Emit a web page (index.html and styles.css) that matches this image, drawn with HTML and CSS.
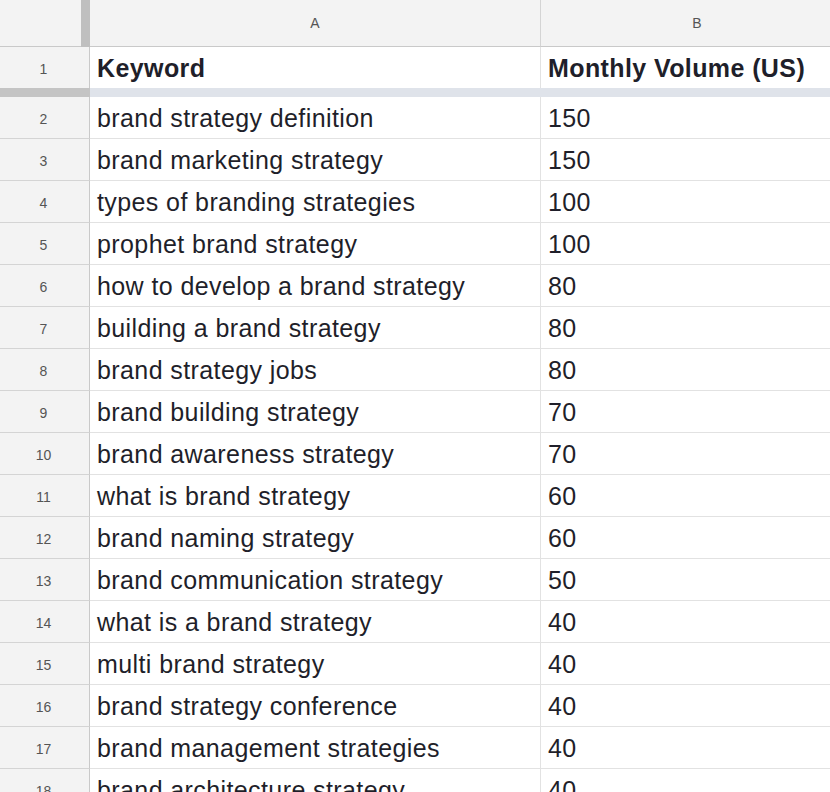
FILE: index.html
```html
<!DOCTYPE html>
<html>
<head>
<meta charset="utf-8">
<link rel="stylesheet" href="styles.css">
</head>
<body>
<div class="sheet">
  <div class="row colhead">
    <div class="corner"></div>
    <div class="vbar"></div>
    <div class="ch a">A</div>
    <div class="ch b">B</div>
  </div>
  <div class="row r1">
    <div class="rh">1</div>
    <div class="cell a bold">Keyword</div>
    <div class="cell b bold">Monthly Volume (US)</div>
  </div>
  <div class="freeze"><div class="fz-rh"></div><div class="fz-cells"></div></div>
  <div class="row"><div class="rh">2</div><div class="cell a">brand strategy definition</div><div class="cell b">150</div></div>
  <div class="row"><div class="rh">3</div><div class="cell a">brand marketing strategy</div><div class="cell b">150</div></div>
  <div class="row"><div class="rh">4</div><div class="cell a">types of branding strategies</div><div class="cell b">100</div></div>
  <div class="row"><div class="rh">5</div><div class="cell a">prophet brand strategy</div><div class="cell b">100</div></div>
  <div class="row"><div class="rh">6</div><div class="cell a">how to develop a brand strategy</div><div class="cell b">80</div></div>
  <div class="row"><div class="rh">7</div><div class="cell a">building a brand strategy</div><div class="cell b">80</div></div>
  <div class="row"><div class="rh">8</div><div class="cell a">brand strategy jobs</div><div class="cell b">80</div></div>
  <div class="row"><div class="rh">9</div><div class="cell a">brand building strategy</div><div class="cell b">70</div></div>
  <div class="row"><div class="rh">10</div><div class="cell a">brand awareness strategy</div><div class="cell b">70</div></div>
  <div class="row"><div class="rh">11</div><div class="cell a">what is brand strategy</div><div class="cell b">60</div></div>
  <div class="row"><div class="rh">12</div><div class="cell a">brand naming strategy</div><div class="cell b">60</div></div>
  <div class="row"><div class="rh">13</div><div class="cell a">brand communication strategy</div><div class="cell b">50</div></div>
  <div class="row"><div class="rh">14</div><div class="cell a">what is a brand strategy</div><div class="cell b">40</div></div>
  <div class="row"><div class="rh">15</div><div class="cell a">multi brand strategy</div><div class="cell b">40</div></div>
  <div class="row"><div class="rh">16</div><div class="cell a">brand strategy conference</div><div class="cell b">40</div></div>
  <div class="row"><div class="rh">17</div><div class="cell a">brand management strategies</div><div class="cell b">40</div></div>
  <div class="row"><div class="rh">18</div><div class="cell a">brand architecture strategy</div><div class="cell b">40</div></div>
</div>
</body>
</html>
```

FILE: styles.css
```css
html, body {
  margin: 0;
  padding: 0;
  background: #ffffff;
  overflow: hidden;
}
.sheet {
  width: 880px;
  font-family: "Liberation Sans", Arial, sans-serif;
  color: #1f1f2a;
}
.row {
  display: flex;
  height: 42px;
}
.colhead {
  height: 47px;
  background: #f3f3f3;
}
.corner {
  width: 81px;
  height: 46px;
  border-bottom: 1px solid #c9c9c9;
  background: #f3f3f3;
}
.vbar {
  width: 9px;
  height: 47px;
  background: #bfbfbf;
}
.ch {
  height: 46px;
  border-bottom: 1px solid #c9c9c9;
  border-right: 1px solid #d4d4d4;
  display: flex;
  align-items: center;
  justify-content: center;
  font-size: 14px;
  color: #555555;
  box-sizing: content-box;
}
.a { width: 450px; }
.b { width: 312px; }
.rh {
  width: 89px;
  flex: none;
  background: #f3f3f3;
  border-right: 1px solid #c9c9c9;
  border-bottom: 1px solid #d4d4d4;
  box-sizing: border-box;
  display: flex;
  align-items: center;
  justify-content: center;
  font-size: 14px;
  color: #555555;
  padding-right: 2px;
  padding-top: 2px;
}
.row .rh { width: 90px; }
.cell {
  flex: none;
  border-right: 1px solid #e2e2e2;
  border-bottom: 1px solid #e2e2e2;
  display: flex;
  align-items: center;
  padding-left: 7px;
  padding-top: 2px;
  font-size: 25px;
  letter-spacing: 0.4px;
  box-sizing: border-box;
  white-space: nowrap;
  overflow: hidden;
}
.cell.a { width: 451px; }
.cell.b { width: 330px; }
.r1 { height: 41px; }
.r1 .rh, .r1 .cell { border-bottom: none; }
.bold { font-weight: bold; }
.freeze {
  display: flex;
  height: 9px;
}
.fz-rh {
  width: 90px;
  background: #c4c4c4;
}
.fz-cells {
  flex: 1;
  background: #dfe3ea;
}
```
